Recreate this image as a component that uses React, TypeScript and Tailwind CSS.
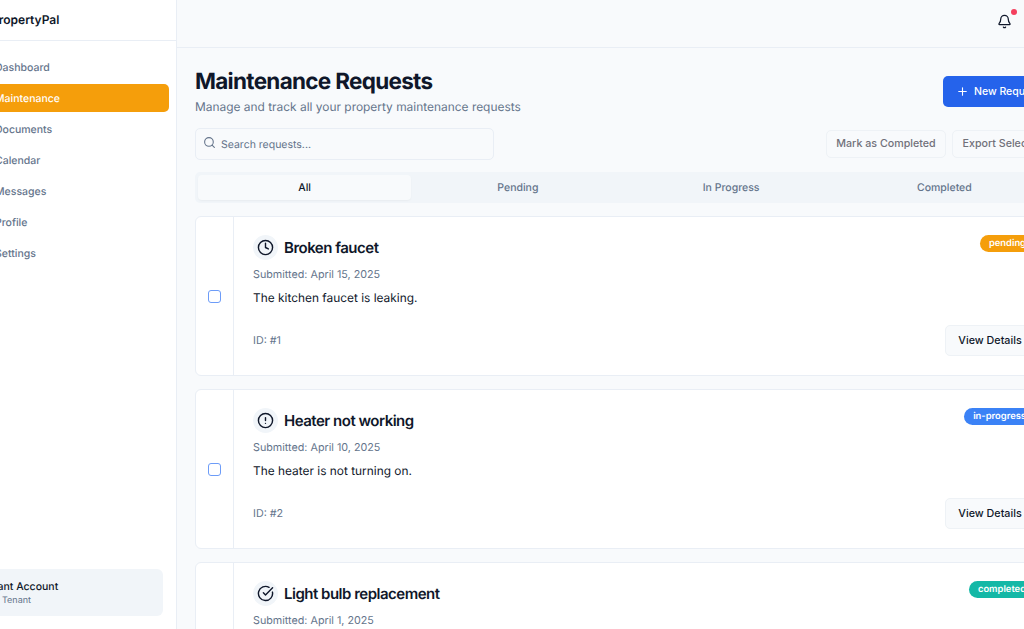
import React from "react";
import { Bell, CheckCircle, Clock, AlertCircle, Plus, Search } from "lucide-react";

const nav = ["Dashboard", "Maintenance", "Documents", "Calendar", "Messages", "Profile", "Settings"];

const cards = [
  { title: "Broken faucet", date: "April 15, 2025", desc: "The kitchen faucet is leaking.", id: "#1", status: "pending", badge: "bg-[#f59e0b]", Icon: Clock },
  { title: "Heater not working", date: "April 10, 2025", desc: "The heater is not turning on.", id: "#2", status: "in-progress", badge: "bg-[#3b82f6]", Icon: AlertCircle },
  { title: "Light bulb replacement", date: "April 1, 2025", desc: "The light bulb needs replacing.", id: "#3", status: "completed", badge: "bg-[#14b8a6]", Icon: CheckCircle },
];

export default function App() {
  return (
    <div className="flex h-[629px] w-[1024px] overflow-hidden bg-[#f8fafc] text-[#0f172a] font-['Inter',sans-serif] [text-rendering:geometricPrecision]">
      <aside className="ml-[-80px] flex h-full w-[257px] shrink-0 flex-col border-r border-[#e9eef5] bg-white">
        <div className="flex h-[41px] shrink-0 items-center border-b border-[#e9eef5] pl-[71px] text-[12px] leading-none font-semibold">
          PropertyPal
        </div>
        <nav className="flex flex-col gap-[3.15px] px-[7px] pt-[12px]">
          {nav.map((n) => (
            <div
              key={n}
              className={`flex h-[28px] items-center rounded-[5px] pt-[1px] pl-[68px] text-[10.5px] font-medium ${
                n === "Maintenance" ? "bg-[#f59e0b] text-white" : "text-[#64748b]"
              }`}
            >
              {n}
            </div>
          ))}
        </nav>
        <div className="mt-auto mb-[13px] ml-[13px] flex h-[47px] w-[230px] flex-col justify-center rounded-[6px] bg-[#f1f5f9] pl-[46px]">
          <div className="text-[10.5px] leading-[15px] font-medium">Tenant Account</div>
          <div className="pl-[23px] text-[9px] leading-[13px] text-[#64748b]">Tenant</div>
        </div>
      </aside>

      <main className="flex h-full w-[896px] shrink-0 flex-col">
        <header className="flex h-[48px] shrink-0 items-center border-b border-[#e9eef5] pl-[820px]">
          <div className="relative mt-[-5px]">
            <Bell className="h-[15px] w-[15px] text-[#0f172a]" strokeWidth={2} />
            <span className="absolute top-[-5px] right-[-5px] h-[6px] w-[6px] rounded-full bg-[#f43f5e]" />
          </div>
        </header>
        <div className="flex flex-col pt-[19px] pr-[19px] pl-[18px]">
          <div className="flex items-start justify-between">
            <div>
              <h1 className="text-[22.5px] leading-[30px] font-bold tracking-[-0.7px]">Maintenance Requests</h1>
              <p className="text-[11.93px] leading-[20px] text-[#64748b]">Manage and track all your property maintenance requests</p>
            </div>
            <button className="mt-[9px] flex h-[31px] w-[111px] items-center gap-[5px] rounded-[5px] bg-[#2563eb] pl-[13px] text-[10.5px] font-medium whitespace-nowrap text-white">
              <Plus className="h-[13px] w-[13px]" />
              New Request
            </button>
          </div>

          <div className="mt-[11px] flex items-center justify-between">
            <div className="flex h-[32px] w-[299px] items-center gap-[5px] rounded-[5px] border border-[#e9eef5] pl-[7px] text-[10.5px] text-[#64748b]">
              <Search className="mt-[-3px] h-[13px] w-[13px]" />
              <span className="mt-[1px]">Search requests...</span>
            </div>
            <div className="flex gap-[6px] text-[10.7px] font-medium text-[#71717a]">
              <button className="h-[28px] w-[120px] rounded-[5px] border border-[#eef2f6] bg-[#f8fafc] pt-[1px] whitespace-nowrap">Mark as Completed</button>
              <button className="h-[28px] w-[102px] rounded-[5px] border border-[#eef2f6] bg-[#f8fafc] pt-[1px] whitespace-nowrap">Export Selected</button>
            </div>
          </div>

          <div className="mt-[12px] grid h-[31px] grid-cols-4 rounded-[5px] bg-[#f1f5f9] p-[3px] text-[10.5px] font-medium text-[#64748b]">
            <div className="flex items-center justify-center rounded-[4px] bg-[#f8fafc] text-[#0f172a] shadow-[0_1px_2px_rgba(0,0,0,0.04)]">All</div>
            <div className="flex items-center justify-center">Pending</div>
            <div className="flex items-center justify-center">In Progress</div>
            <div className="flex items-center justify-center">Completed</div>
          </div>

          <div className="mt-[13px] flex flex-col gap-[13px]">
            {cards.map(({ title, date, desc, id, status, badge, Icon }) => (
              <div key={id} className="flex h-[160px] shrink-0 rounded-[6px] border border-[#e9eef5] bg-white">
                <div className="flex w-[38px] shrink-0 items-center justify-center border-r border-[#e9eef5]">
                  <span className="h-[13px] w-[13px] rounded-[3px] border border-[#6d9cf8]" />
                </div>
                <div className="flex flex-1 flex-col pt-[18px] pr-[18px] pl-[19px]">
                  <div className="flex items-start justify-between">
                    <div className="flex items-center gap-[6px]">
                      <span className="flex h-[25px] w-[25px] items-center justify-center rounded-full bg-[#f1f5f9]">
                        <Icon className="h-[17px] w-[17px]" strokeWidth={2} />
                      </span>
                      <h2 className="text-[15px] leading-[25px] font-semibold tracking-[-0.5px]">{title}</h2>
                    </div>
                    <span className={`flex h-[17px] items-center rounded-full px-[9px] pt-[1px] text-[9.4px] font-semibold text-white ${badge}`}>{status}</span>
                  </div>
                  <div className="mt-[6px] text-[10.75px] leading-[18px] text-[#64748b]">Submitted: {date}</div>
                  <div className="mt-[4px] text-[11.9px] leading-[20px]">{desc}</div>
                  <div className="mt-[17px] flex items-center justify-between">
                    <span className="pt-[2px] text-[10.75px] text-[#64748b]">ID: {id}</span>
                    <button className="h-[31px] w-[90px] rounded-[5px] border border-[#eef2f6] bg-[#f8fafc] pt-[1px] text-[10.75px] font-medium whitespace-nowrap">View Details</button>
                  </div>
                </div>
              </div>
            ))}
          </div>
        </div>
      </main>
    </div>
  );
}
